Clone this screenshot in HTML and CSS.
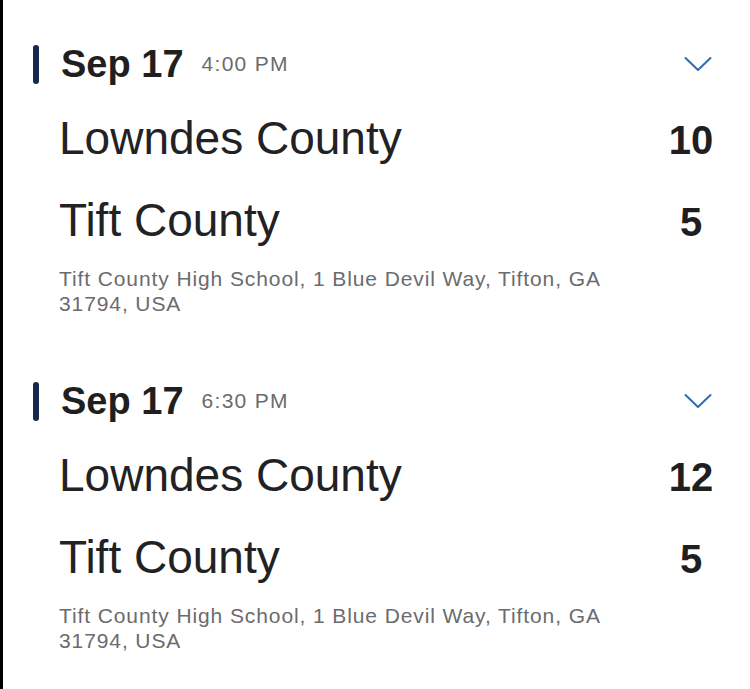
FILE: index.html
```html
<!DOCTYPE html>
<html lang="en">
<head>
<meta charset="utf-8">
<title>Games</title>
<link rel="stylesheet" href="styles.css">
</head>
<body>
<div class="page">
  <section class="game">
    <div class="game-header">
      <span class="bar"></span>
      <span class="date">Sep 17</span>
      <span class="time">4:00 PM</span>
      <svg class="chevron" width="28" height="16" viewBox="0 0 28 16" aria-hidden="true"><polyline points="1.5,2 14,14 26.5,2" fill="none" stroke="#2e6cb2" stroke-width="2" stroke-linecap="round" stroke-linejoin="round"/></svg>
    </div>
    <div class="team-row"><span class="team">Lowndes County</span><span class="score">10</span></div>
    <div class="team-row"><span class="team">Tift County</span><span class="score">5</span></div>
    <p class="address">Tift County High School, 1 Blue Devil Way, Tifton, GA 31794, USA</p>
  </section>
  <section class="game">
    <div class="game-header">
      <span class="bar"></span>
      <span class="date">Sep 17</span>
      <span class="time">6:30 PM</span>
      <svg class="chevron" width="28" height="16" viewBox="0 0 28 16" aria-hidden="true"><polyline points="1.5,2 14,14 26.5,2" fill="none" stroke="#2e6cb2" stroke-width="2" stroke-linecap="round" stroke-linejoin="round"/></svg>
    </div>
    <div class="team-row"><span class="team">Lowndes County</span><span class="score">12</span></div>
    <div class="team-row"><span class="team">Tift County</span><span class="score">5</span></div>
    <p class="address">Tift County High School, 1 Blue Devil Way, Tifton, GA 31794, USA</p>
  </section>
</div>
</body>
</html>
```
FILE: styles.css
```css
html, body {
  margin: 0;
  padding: 0;
  background: #ffffff;
}
body {
  font-family: "Liberation Sans", Arial, sans-serif;
  color: #1f1f21;
}
.page {
  box-sizing: border-box;
  min-height: 100vh;
  border-left: 3px solid #000;
  padding: 44px 29px 0 30px;
}
.game {
  margin-bottom: 65px;
}
.game-header {
  display: flex;
  align-items: center;
  height: 40px;
}
.bar {
  width: 6px;
  height: 39px;
  border-radius: 3px;
  background: #14294b;
  margin-right: 22px;
  flex: none;
}
.date {
  font-size: 38px;
  font-weight: 700;
  color: #1f1f21;
  line-height: 40px;
}
.time {
  font-size: 21px;
  letter-spacing: 1.3px;
  color: #6b6b6d;
  margin-left: 18px;
  line-height: 40px;
}
.chevron {
  margin-left: auto;
  margin-right: 9px;
}
.team-row {
  display: flex;
  align-items: baseline;
  justify-content: space-between;
  padding-left: 26px;
  height: 82px;
  line-height: 82px;
}
.team-row:first-of-type {
  margin-top: 13px;
}
.game-header + .team-row {
  margin-top: 13px;
}
.team {
  font-size: 46px;
  color: #222224;
}
.score {
  width: 60px;
  text-align: center;
  font-size: 40px;
  font-weight: 700;
  color: #1f1f21;
}
.address {
  margin: 5px 0 0 26px;
  width: 600px;
  font-size: 21px;
  letter-spacing: 0.9px;
  line-height: 25px;
  color: #6b6b6d;
}
```
